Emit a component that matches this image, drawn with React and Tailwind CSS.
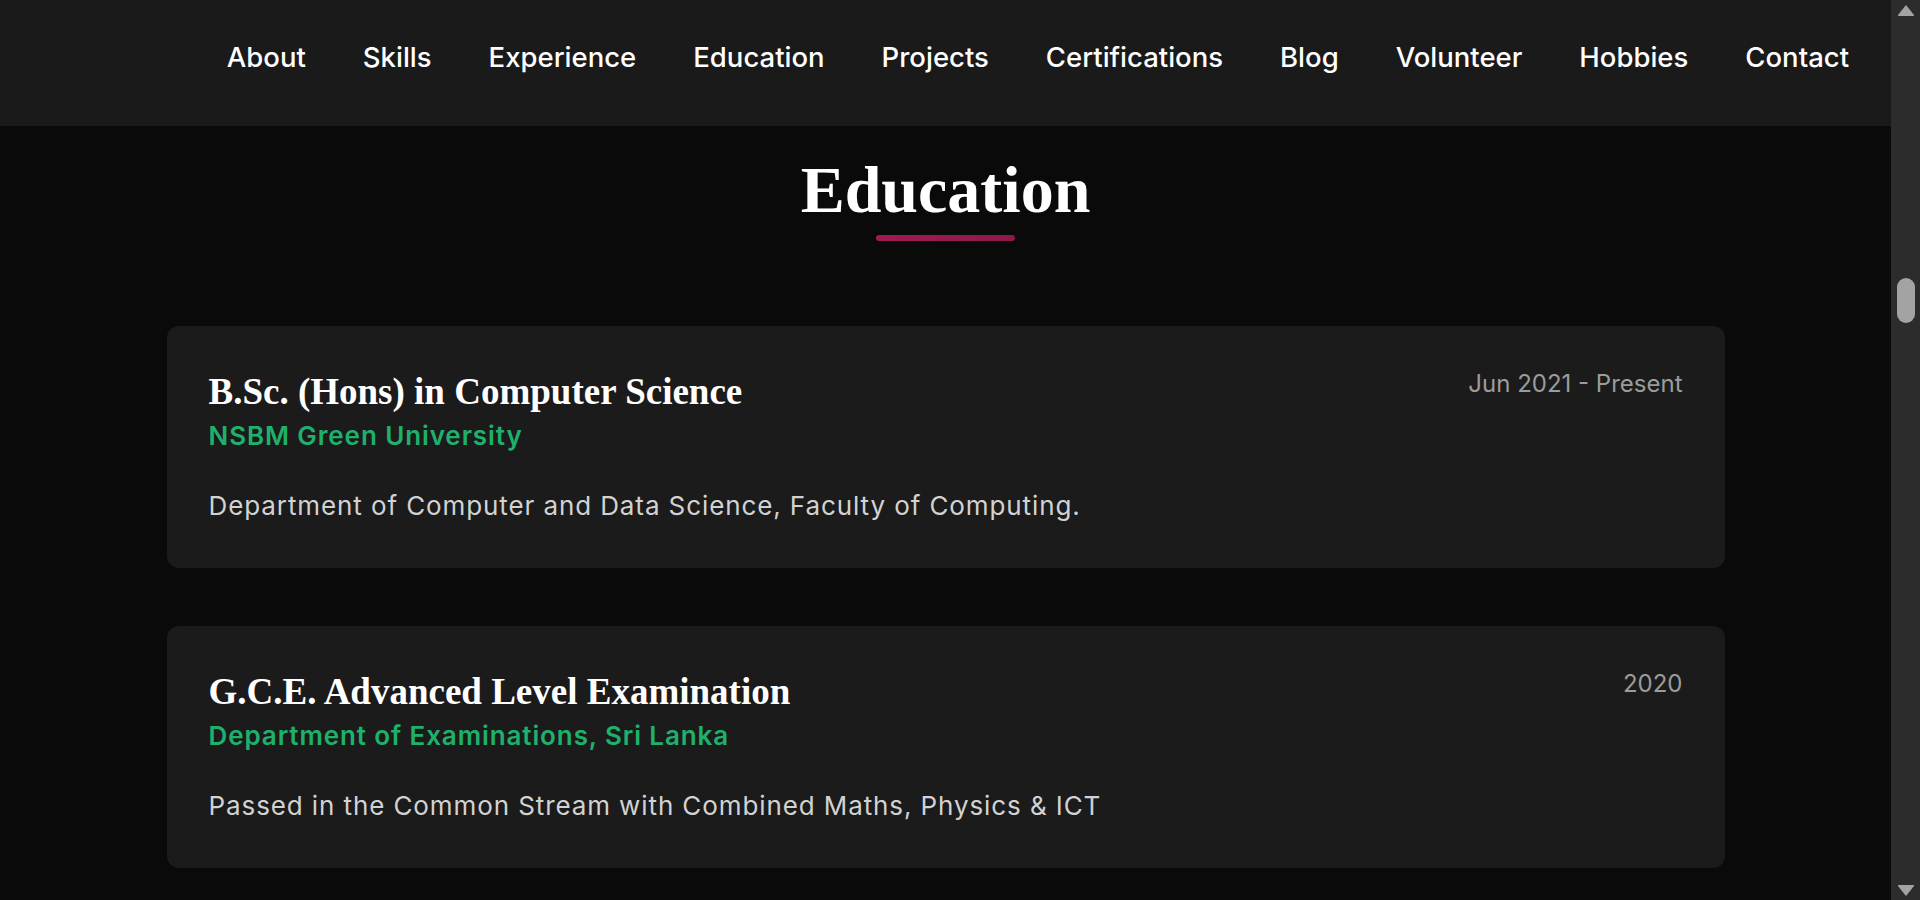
const navLinks = [
  "About",
  "Skills",
  "Experience",
  "Education",
  "Projects",
  "Certifications",
  "Blog",
  "Volunteer",
  "Hobbies",
  "Contact",
];

const education = [
  {
    title: "B.Sc. (Hons) in Computer Science",
    school: "NSBM Green University",
    date: "Jun 2021 - Present",
    desc: "Department of Computer and Data Science, Faculty of Computing.",
  },
  {
    title: "G.C.E. Advanced Level Examination",
    school: "Department of Examinations, Sri Lanka",
    date: "2020",
    desc: "Passed in the Common Stream with Combined Maths, Physics & ICT",
  },
];

const sans = { fontFamily: "Inter, 'Noto Sans', sans-serif" };
const serif = { fontFamily: "'Liberation Serif', 'DejaVu Serif', serif" };

const EducationCard = ({ item }) => (
  <div className="bg-[#1b1b1b] rounded-xl px-[42px] pt-[44px] pb-[44px] flex items-start justify-between">
    <div>
      <h3 className="text-[37px] leading-[44px] font-bold text-white" style={serif}>
        {item.title}
      </h3>
      <p className="mt-[6px] text-[26px] leading-[32px] font-semibold tracking-[0.9px] text-[#1fb16c]">
        {item.school}
      </p>
      <p className="mt-[36px] text-[26px] leading-[36px] tracking-[0.9px] text-[#d2d2d2]">
        {item.desc}
      </p>
    </div>
    <span className="text-[24px] leading-[27px] text-[#9c9c9c]">{item.date}</span>
  </div>
);

const App = () => {
  return (
    <div className="flex h-screen w-full overflow-hidden bg-[#0a0a0a]" style={sans}>
      <div className="flex-1 flex flex-col min-w-0">
        {/* nav */}
        <nav className="h-[126px] shrink-0 bg-[#1a1a1a] flex items-center justify-end pr-[42px] pb-[10px]">
          <ul className="flex items-center gap-[57px]">
            {navLinks.map((link) => (
              <li key={link} className="text-white text-[27.5px] font-medium cursor-pointer">
                {link}
              </li>
            ))}
          </ul>
        </nav>

        {/* education section */}
        <section className="flex flex-col items-center pt-[24px]">
          <h2 className="text-[66px] leading-[79px] font-bold text-white" style={serif}>
            Education
          </h2>
          <div className="mt-[6px] h-1.5 w-[139px] rounded-full bg-gradient-to-r from-[#a11a51] to-[#8c1a4a]" />

          <div className="mt-[85px] w-[1558px] flex flex-col gap-[58px]">
            {education.map((item) => (
              <EducationCard key={item.title} item={item} />
            ))}
          </div>
        </section>
      </div>

      {/* scrollbar */}
      <div className="w-[29px] shrink-0 bg-[#2c2c2c] relative">
        <svg className="absolute top-[4px] left-[6px]" width="18" height="13" viewBox="0 0 18 13">
          <path d="M9 1 L17 11 Q17.5 12 16 12 L2 12 Q0.5 12 1 11 Z" fill="#a3a3a3" />
        </svg>
        <div className="absolute top-[278px] left-[6px] w-[18px] h-[45px] rounded-[9px] bg-[#a3a3a3]" />
        <svg className="absolute bottom-[3px] left-[6px]" width="18" height="13" viewBox="0 0 18 13">
          <path d="M9 12 L17 2 Q17.5 1 16 1 L2 1 Q0.5 1 1 2 Z" fill="#a3a3a3" />
        </svg>
      </div>
    </div>
  );
};

export default App;
